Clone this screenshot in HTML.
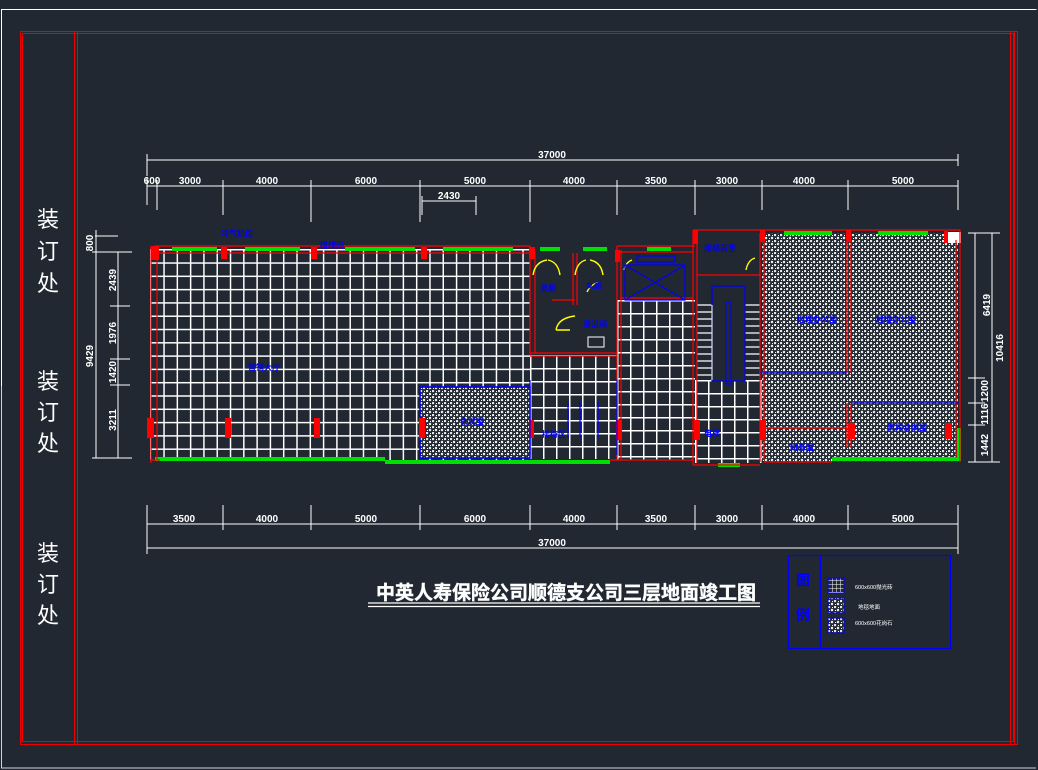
<!DOCTYPE html>
<html><head><meta charset="utf-8"><style>
html,body{margin:0;padding:0;background:#212831;}
body{position:relative;width:1038px;height:770px;overflow:hidden}
svg{display:block;position:absolute;left:0;top:0}
.g{position:absolute;background-image:linear-gradient(90deg,#fff 1.6px,transparent 1.6px),linear-gradient(#fff 1.6px,transparent 1.6px);background-size:13.3px 13.3px}
text{font-family:"Liberation Sans","Noto Sans CJK SC",sans-serif}
</style></head><body>
<div class="g" style="left:150px;top:249px;width:380px;height:211px"></div>
<div class="g" style="left:530px;top:355px;width:87px;height:104px;background-size:13px 13px"></div>
<div class="g" style="left:617px;top:300px;width:78px;height:160px;background-size:13px 13px"></div>
<div class="g" style="left:695px;top:380px;width:67px;height:83px;background-size:13px 13px"></div>
<svg width="1038" height="770" viewBox="0 0 1038 770" xmlns="http://www.w3.org/2000/svg">
<defs>
<pattern id="grid2" width="4" height="4" patternUnits="userSpaceOnUse">
<path d="M0 0H4M0 0V4" stroke="#fff" stroke-width="1" fill="none"/>
</pattern>
<pattern id="hatch" width="6" height="6" patternUnits="userSpaceOnUse">
<rect width="6" height="6" fill="#212831"/>
<path d="M0 0L2 2M2 0L0 2M3 3L5 5M5 3L3 5" stroke="#fff" stroke-width="0.9"/>
<rect x="1" y="4" width="1" height="1" fill="#fff"/><rect x="4" y="1" width="1" height="1" fill="#fff"/>
</pattern>
</defs>
<!-- outer white frame -->
<path d="M1.5 386V9.5H1036.5" stroke="#fff" stroke-width="1" fill="none"/>
<path d="M1.5 386V768H1036" stroke="#cfd2d6" stroke-width="1" fill="none"/>
<!-- red frames -->
<rect x="20.5" y="31.5" width="997" height="713" fill="none" stroke="#e00" stroke-width="1"/>
<rect x="22.5" y="33.5" width="991" height="708" fill="none" stroke="#e00" stroke-width="1"/>
<path d="M74.5 32V744M77.5 32V744" stroke="#e00" stroke-width="1"/>
<path d="M1010.5 32V744M1014.5 32V744" stroke="#e00"/>
<!-- binding text -->
<g fill="#fff" font-size="22" text-anchor="middle">
<text x="48" y="227">装</text><text x="48" y="259">订</text><text x="48" y="291">处</text>
<text x="48" y="389">装</text><text x="48" y="420">订</text><text x="48" y="451">处</text>
<text x="48" y="561">装</text><text x="48" y="592">订</text><text x="48" y="623">处</text>
</g>

<!-- dimensions -->
<g stroke="#fff" stroke-width="1" fill="none">
<path d="M147 160H958M147 154V176M958 154V166"/>
<path d="M147 186H958"/>
<path d="M147 178V205M157 180V210M223 180V215M311 180V222M420 180V222M530 180V222M617 180V215M695 180V215M762 180V210M848 180V210M958 180V210"/>
<path d="M422 201H476M422 196V215M476 196V215"/>
<path d="M147 524H958M147 505V554M223 505V530M311 505V530M420 505V530M530 505V530M617 505V530M695 505V530M762 505V530M848 505V530M958 505V554"/>
<path d="M147 548H958"/>
<path d="M96 252V458M118 252V458M92 252H132M92 458H132M110 306H130M110 359H130M110 385H130M95 236H118M96 230V252"/>
<path d="M975 233V462M992 233V462M968 233H1000M968 462H1000M968 378H985M968 403H985M968 425H985"/>
</g>
<g fill="#fff" font-size="10" text-anchor="middle" font-weight="bold">
<text x="552" y="158">37000</text>
<text x="152" y="184">600</text><text x="190" y="184">3000</text><text x="267" y="184">4000</text><text x="366" y="184">6000</text><text x="475" y="184">5000</text><text x="574" y="184">4000</text><text x="656" y="184">3500</text><text x="727" y="184">3000</text><text x="804" y="184">4000</text><text x="903" y="184">5000</text>
<text x="449" y="199">2430</text>
<text x="184" y="522">3500</text><text x="267" y="522">4000</text><text x="366" y="522">5000</text><text x="475" y="522">6000</text><text x="574" y="522">4000</text><text x="656" y="522">3500</text><text x="727" y="522">3000</text><text x="804" y="522">4000</text><text x="903" y="522">5000</text>
<text x="552" y="546">37000</text>
<text transform="translate(93,243) rotate(-90)">800</text>
<text transform="translate(116,280) rotate(-90)">2439</text>
<text transform="translate(116,333) rotate(-90)">1976</text>
<text transform="translate(116,372) rotate(-90)">1420</text>
<text transform="translate(116,420) rotate(-90)">3211</text>
<text transform="translate(93,356) rotate(-90)">9429</text>
<text transform="translate(990,305) rotate(-90)">6419</text>
<text transform="translate(1003,348) rotate(-90)">10416</text>
<text transform="translate(988,391) rotate(-90)">1200</text>
<text transform="translate(988,414) rotate(-90)">1116</text>
<text transform="translate(988,445) rotate(-90)">1442</text>
</g>

<!-- stair -->
<g stroke="#fff" stroke-width="1.3"><path d="M697 305H760M697 312H760M697 319H760M697 326H760M697 333H760M697 340H760M697 347H760M697 354H760M697 361H760M697 368H760M697 375H760"/></g>
<rect x="712" y="286" width="33" height="95" fill="#212831" stroke="#00f" stroke-width="1.2"/>
<g stroke="#fff"><path d="M712 305V380"/></g>
<rect x="726" y="302" width="5" height="82" fill="none" stroke="#00f"/>
<!-- hatched -->
<rect x="420" y="387" width="110" height="71" fill="url(#hatch)" stroke="#00f" stroke-width="1.5"/>
<rect x="762" y="233" width="196" height="229" fill="url(#hatch)"/>
<rect x="945" y="232" width="16" height="11" fill="#fff"/>
<!-- dark areas -->
<rect x="530" y="250" width="87" height="103" fill="#212831"/>
<rect x="620" y="252" width="73" height="46" fill="#212831"/>
<rect x="697" y="235" width="62" height="40" fill="#212831"/>
<!-- walls green -->
<g fill="#00e000">
<rect x="172" y="247" width="45" height="4"/><rect x="245" y="247" width="55" height="4"/><rect x="345" y="247" width="70" height="4"/><rect x="443" y="247" width="70" height="4"/>
<rect x="540" y="247" width="20" height="4"/><rect x="583" y="247" width="24" height="4"/><rect x="647" y="247" width="24" height="4"/>
<rect x="784" y="231" width="48" height="4"/><rect x="878" y="231" width="50" height="4"/>
<rect x="155" y="457" width="230" height="4"/><rect x="385" y="460" width="225" height="4"/>
<rect x="718" y="463" width="22" height="4"/><rect x="832" y="457" width="128" height="4"/><rect x="957" y="428" width="4" height="33"/>
</g>
<!-- red walls -->
<g fill="none" stroke="#f00" stroke-width="1.2">
<path d="M155 246H530M155 253H530M151 246V463M157 253V460M150 460H160"/>
<path d="M530 246V355M535 252V353M530 353H617M530 356H617M617 246V460M621 250V460"/>
<path d="M617 246H695M620 252H693M620 298H693M693 230V465M697 233V463M693 230H760M697 275H760"/>
<path d="M760 230H960M760 233V462M764 236V460M847 233V373M851 233V373M847 403V448M851 403V448M960 230V462M956 240V458"/>
<path d="M764 428H847M764 462H832M693 465H760M610 460H693"/>
<path d="M573 253V305M577 253V305M552 300H575"/>
</g>
<g fill="#f00">
<rect x="151" y="246" width="8" height="14"/><rect x="221" y="247" width="6" height="12"/><rect x="311" y="247" width="6" height="12"/><rect x="421" y="247" width="6" height="12"/><rect x="529" y="247" width="6" height="12"/>
<rect x="147" y="418" width="7" height="20"/><rect x="225" y="418" width="6" height="20"/><rect x="314" y="418" width="6" height="20"/><rect x="419" y="418" width="6" height="20"/><rect x="529" y="420" width="5" height="18"/>
<rect x="616" y="420" width="6" height="20"/><rect x="694" y="420" width="6" height="20"/><rect x="693" y="230" width="5" height="14"/><rect x="760" y="230" width="5" height="12"/><rect x="846" y="230" width="5" height="12"/><rect x="944" y="231" width="4" height="12"/>
<rect x="760" y="420" width="6" height="20"/><rect x="848" y="423" width="7" height="16"/><rect x="945" y="423" width="7" height="16"/><rect x="615" y="250" width="5" height="12"/>
</g>
<!-- yellow doors -->
<g fill="none" stroke="#ff0" stroke-width="1.4">
<path d="M533 275Q535 262 547 260M560 275Q558 262 548 260M575 275Q577 262 586 260M603 275Q601 262 590 260M556 330Q558 318 575 316M587 292Q590 285 598 282M624 270Q626 262 632 260M746 270Q748 260 755 258M556 330H570"/>
</g>
<!-- blue elements -->
<g fill="none" stroke="#00f" stroke-width="1.2">
<path d="M625 265H685V300H625ZM625 265L685 300M685 265L625 300M637 256H675V262H637Z"/>
<path d="M530 380V455M617 380V455M760 373H847M851 403H958M420 387H530"/>
<path d="M568 402V438M580 402V438M598 402V438"/>
</g>
<rect x="588" y="337" width="16" height="10" fill="none" stroke="#fff"/>
<g fill="#00f" font-size="8" font-weight="bold">
<text x="221" y="236">冷气机位</text><text x="320" y="248">楼梯间</text><text x="248" y="370">营销大厅</text><text x="460" y="424">会议室</text>
<text x="540" y="291">男厕</text><text x="586" y="288">女厕</text><text x="583" y="327">清洁间</text><text x="542" y="437">接待区</text>
<text x="704" y="251">楼梯前室</text><text x="797" y="322">经理办公室</text><text x="876" y="322">经理办公室</text><text x="887" y="430">贵宾洽谈室</text>
<text x="790" y="450">财务室</text><text x="704" y="436">电梯</text>
</g>

<!-- title -->
<text x="566" y="599" fill="#fff" font-size="19" font-weight="bold" text-anchor="middle" stroke="#fff" stroke-width="0.4">中英人寿保险公司顺德支公司三层地面竣工图</text>
<path d="M368 603H760M368 606.5H760" stroke="#fff" stroke-width="1.2"/>

<!-- legend -->
<rect x="788.5" y="555.5" width="162" height="93" fill="none" stroke="#00f" stroke-width="1.2"/>
<path d="M820.5 556V648" stroke="#00f" stroke-width="1.2"/>
<text x="803" y="585" fill="#00f" font-size="14" font-weight="bold" text-anchor="middle">图</text>
<text x="803" y="620" fill="#00f" font-size="14" font-weight="bold" text-anchor="middle">例</text>
<rect x="828" y="578" width="16" height="15" fill="url(#grid2)" stroke="#00f"/>
<rect x="828" y="598" width="16" height="15" fill="url(#hatch)" stroke="#00f"/>
<rect x="828" y="618" width="16" height="15" fill="url(#hatch)" stroke="#00f"/>
<g fill="#fff" font-size="5.5"><text x="855" y="589">600x600抛光砖</text><text x="858" y="609">地毯地面</text><text x="855" y="625">600x600花岗石</text></g>
</svg>
</body></html>
